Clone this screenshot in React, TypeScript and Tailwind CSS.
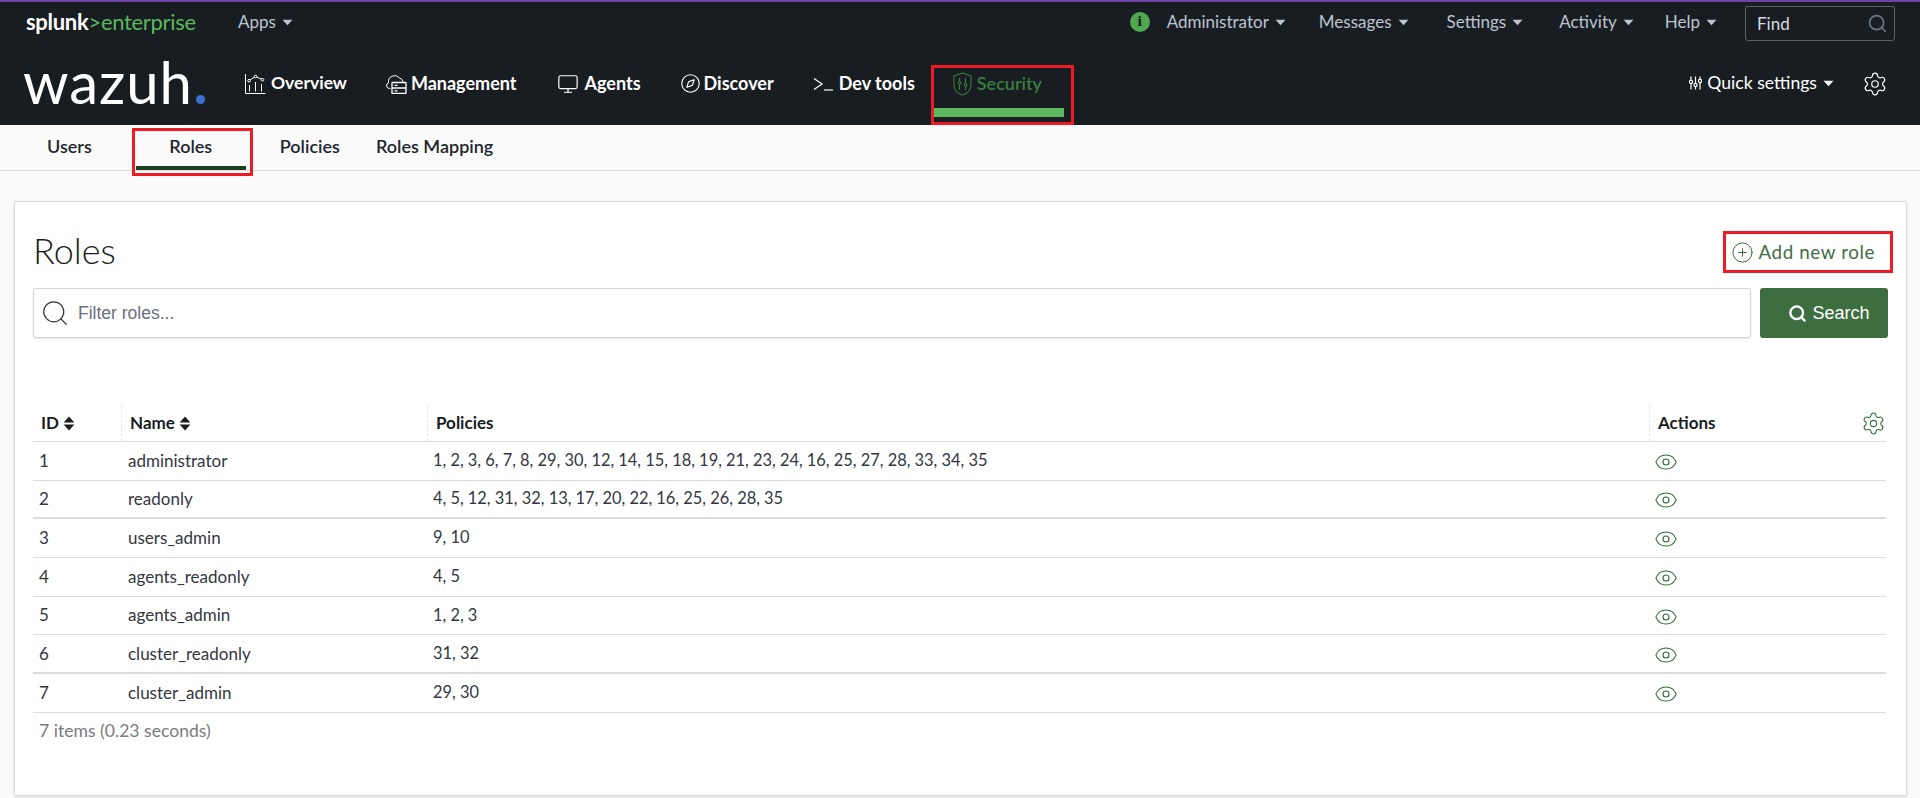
import { CirclePlus, Compass, Eye, Monitor, Search, Settings } from 'lucide-react';

const ROLES = [
  { id: 1, name: 'administrator', policies: '1, 2, 3, 6, 7, 8, 29, 30, 12, 14, 15, 18, 19, 21, 23, 24, 16, 25, 27, 28, 33, 34, 35' },
  { id: 2, name: 'readonly', policies: '4, 5, 12, 31, 32, 13, 17, 20, 22, 16, 25, 26, 28, 35', thick: true },
  { id: 3, name: 'users_admin', policies: '9, 10' },
  { id: 4, name: 'agents_readonly', policies: '4, 5' },
  { id: 5, name: 'agents_admin', policies: '1, 2, 3' },
  { id: 6, name: 'cluster_readonly', policies: '31, 32', thick: true },
  { id: 7, name: 'cluster_admin', policies: '29, 30' },
];

function Caret({ className }: { className?: string }) {
  return (
    <svg className={className} width="11" height="7" viewBox="0 0 10 6" fill="currentColor">
      <path d="M0.5 0.5h9L5 5.6z" />
    </svg>
  );
}

function SortCaret() {
  return (
    <svg className="ml-[4px]" width="12" height="15" viewBox="0 0 11 14" fill="#1a1c21">
      <path d="M5.5 0.5 10.5 6H0.5z" />
      <path d="M5.5 13.5 10.5 8H0.5z" />
    </svg>
  );
}

function TopLink({ label, className }: { label: string; className: string }) {
  return (
    <div className={`flex items-center gap-[6px] text-[17px] text-[#bcc5cf] ${className}`}>
      <span>{label}</span>
      <Caret className="text-[#bcc5cf]" />
    </div>
  );
}

function OverviewIcon() {
  return (
    <svg width="21" height="20" viewBox="0 0 21 20" fill="none" stroke="white" strokeWidth="1">
      <path d="M0.5 0v19.5H20.500" />
      <path d="M4 6.700 10.500 2.500 17.500 5.700" />
      <circle cx="4" cy="6.700" r="1.300" fill="#181d22" />
      <circle cx="10.500" cy="2.500" r="1.300" fill="#181d22" />
      <circle cx="17.500" cy="5.700" r="1.300" fill="#181d22" />
      <path d="M4.500 11v6.500M10.500 8v9.500M16.500 10v7.500" />
    </svg>
  );
}

function ManagementIcon() {
  return (
    <svg width="21" height="21" viewBox="0 0 21 21" fill="none" stroke="white" strokeWidth="1">
      <path d="M4.500 15.500H3.500a3 3 0 0 1-1-5.800A6.200 6.200 0 0 1 13.500 5a4.500 4.500 0 0 1 3.500 4" />
      <rect x="6" y="9.500" width="14" height="11" rx="0.500" strokeWidth="1.300" />
      <path d="M6 15h14M8.500 12.300h3M8.500 17.800h3" strokeWidth="1.300" />
    </svg>
  );
}

function DevToolsIcon() {
  return (
    <svg width="20" height="14" viewBox="0 0 20 14" fill="none" stroke="white" strokeWidth="1.200">
      <path d="M1 1.500 9 7l-8 5.500" />
      <path d="M11 13h9" />
    </svg>
  );
}

function ShieldIcon() {
  return (
    <svg width="19" height="24" viewBox="0 0 19 24" fill="none" stroke="#3a7d3e" strokeWidth="1.100">
      <path d="M9.500 1 18 4v9c0 5-4 8.500-8.500 10C5 21.500 1 18 1 13V4z" />
      <path d="M6.500 6v3M6.500 13v5M12.500 6v5M12.500 15v3" />
      <circle cx="6.500" cy="11" r="1.500" />
      <circle cx="12.500" cy="13" r="1.500" />
    </svg>
  );
}

function SlidersIcon() {
  return (
    <svg width="13" height="14" viewBox="0 0 13 14" fill="none" stroke="white" strokeWidth="1.200">
      <path d="M2 0.500v3.500M2 8v5.500M6.500 0.500V7M6.500 11v2.500M11 0.500v2.500M11 7v6.500" />
      <circle cx="2" cy="6" r="1.600" />
      <circle cx="6.500" cy="9" r="1.600" />
      <circle cx="11" cy="5" r="1.600" />
    </svg>
  );
}

function HeaderCell({ label, sort, className }: { label: string; sort?: boolean; className: string }) {
  return (
    <div className={`flex h-[36px] items-center border-l border-dashed border-[#d9eedb] text-[17px] font-bold text-[#1a1c21] ${className}`}>
      <span>{label}</span>
      {sort && <SortCaret />}
    </div>
  );
}

export default function App() {
  return (
    <div className="flex h-[798px] flex-col overflow-hidden bg-[#fafafa] font-['Lato',sans-serif]">
      <header className="h-[125px] border-t-2 border-[#6f42a8] bg-[#181d22]">
        <div className="flex h-[40px] items-center">
          <div className="ml-[26px] w-[212px] text-[22px] leading-none tracking-[-0.3px]">
            <span className="font-bold text-white">splunk</span>
            <span className="text-[#5cb85c]">&gt;enterprise</span>
          </div>
          <TopLink label="Apps" className="" />
          <div className="ml-auto flex items-center">
            <div className="flex h-[20px] w-[20px] items-center justify-center rounded-full bg-[#4fa84f] font-['DejaVu_Serif',serif] text-[13px] font-bold text-[#181d22]">
              i
            </div>
            <TopLink label="Administrator" className="ml-[17px]" />
            <TopLink label="Messages" className="ml-[33px]" />
            <TopLink label="Settings" className="ml-[38px]" />
            <TopLink label="Activity" className="ml-[36px]" />
            <TopLink label="Help" className="ml-[31px]" />
            <div className="mt-[3px] mr-[25px] ml-[28px] flex h-[35px] w-[150px] items-center justify-between rounded-[3px] border border-[#5b6168] pr-[6px] pl-[11px] text-[17px] text-[#d5dbe1]">
              <span>Find</span>
              <Search size={21} strokeWidth={1.800} className="text-[#6d7784]" />
            </div>
          </div>
        </div>
        <div className="flex h-[83px] items-center">
          <div className="ml-[23px] flex w-[222px] items-baseline pb-[3px] text-[58px] leading-none tracking-[1px] text-white">
            wazuh
            <span className="ml-[3px] h-[9px] w-[9px] rounded-full bg-[#3c6fd6]" />
          </div>
          <div className="flex items-center gap-[5px] text-[17.500px] font-bold text-white">
            <OverviewIcon />
            <span>Overview</span>
          </div>
          <div className="ml-[39px] flex items-center gap-[4px] text-[18px] font-bold text-white">
            <ManagementIcon />
            <span>Management</span>
          </div>
          <div className="ml-[41px] flex items-center gap-[5px] text-[18px] font-bold text-white">
            <Monitor size={22} strokeWidth={1.300} />
            <span>Agents</span>
          </div>
          <div className="ml-[39px] flex items-center gap-[3px] text-[18px] font-bold text-white">
            <Compass size={21} strokeWidth={1.300} />
            <span>Discover</span>
          </div>
          <div className="ml-[39px] flex items-center gap-[6px] text-[18px] font-bold text-white">
            <DevToolsIcon />
            <span>Dev tools</span>
          </div>
          <div className="relative ml-[18px] flex h-[83px] w-[131px] items-center gap-[5px] pl-[20px] text-[18px] font-semibold text-[#3a7d3e]">
            <ShieldIcon />
            <span>Security</span>
            <span className="absolute right-0 bottom-[8px] left-0 h-[9px] bg-[#5cb85c]" />
            <span className="absolute top-[23px] -right-[10px] bottom-0 -left-[2px] border-[3px] border-[#ed1c24]" />
          </div>
          <div className="ml-auto flex items-center gap-[5px] text-[17.600px] text-white">
            <SlidersIcon />
            <span>Quick settings</span>
            <Caret className="ml-[1px] text-white" />
          </div>
          <Settings size={26} strokeWidth={1.100} className="mr-[32px] ml-[28px] text-white" />
        </div>
      </header>

      <nav className="flex h-[46px] items-center border-b border-[#dcdcdc] bg-[#fafafa] pb-[2px] text-[18px] font-semibold text-[#23262d]">
        <span className="ml-[47px]">Users</span>
        <div className="relative ml-[44px] flex h-[44px] w-[110px] items-center justify-center">
          <span>Roles</span>
          <span className="absolute right-0 -bottom-[1px] left-0 h-[4px] bg-[#1f3d1f]" />
          <span className="absolute top-[3px] -right-[7px] -bottom-[7px] -left-[4px] border-[3px] border-[#ed1c24]" />
        </div>
        <span className="ml-[34px]">Policies</span>
        <span className="ml-[36px]">Roles Mapping</span>
      </nav>

      <main className="flex-1 pt-[30px] pr-[13px] pl-[14px]">
        <section className="h-[595px] rounded-[2px] border border-[#dcdcdc] bg-white pt-[29px] pr-[18px] pl-[18px] shadow-[0_1px_3px_rgba(0,0,0,0.12)]">
          <div className="flex h-[42px] items-center justify-between">
            <h1 className="pb-[4px] text-[36px] leading-none font-light text-[#1a1c21]">Roles</h1>
            <div className="relative mr-[13px] flex items-center gap-[5px] text-[18.800px] tracking-[0.6px] text-[#3f6e4a]">
              <CirclePlus size={23} strokeWidth={1} className="text-[#2f6b35]" />
              <span>Add new role</span>
              <span className="absolute -top-[7px] -right-[18px] -bottom-[7px] -left-[8px] border-[3px] border-[#ed1c24]" />
            </div>
          </div>

          <div className="mt-[15px] flex gap-[9px]">
            <div className="flex h-[50px] flex-1 items-center rounded-[3px] border border-[#d3d6db] bg-white pl-[6px] shadow-[0_1px_2px_rgba(0,0,0,0.1)]">
              <Search size={30} strokeWidth={1} className="text-[#343741]" />
              <span className="ml-[8px] font-['Liberation_Sans',sans-serif] text-[17.500px] text-[#69707d]">Filter roles...</span>
            </div>
            <button className="flex h-[50px] w-[128px] items-center justify-center gap-[5px] rounded-[3px] bg-[#3c6e3f] pl-[10px] font-['Liberation_Sans',sans-serif] text-[18px] text-white">
              <Search size={19} strokeWidth={3} />
              Search
            </button>
          </div>

          <div className="mt-[67px] mr-[2px]">
            <div className="grid grid-cols-[88px_306px_1222px_237px] items-center border-b border-[#dcdcdc]">
              <div className="flex items-center pl-[8px] text-[17px] font-bold text-[#1a1c21]">
                ID
                <SortCaret />
              </div>
              <HeaderCell label="Name" sort className="pl-[8px]" />
              <HeaderCell label="Policies" className="pl-[8px]" />
              <div className="flex h-[36px] items-center justify-between border-l border-dashed border-[#d9eedb] pl-[8px] text-[17px] font-bold text-[#1a1c21]">
                <span>Actions</span>
                <Settings size={25} strokeWidth={1} className="text-[#2f6b35]" />
              </div>
            </div>
            {ROLES.map((role) => (
              <div
                key={role.id}
                className={`grid h-[38.700px] grid-cols-[88px_306px_1222px_237px] items-center border-[#dcdcdc] pb-[1px] text-[17px] text-[#343741] ${role.thick ? 'border-b-2' : 'border-b'}`}
              >
                <span className="pl-[6px]">{role.id}</span>
                <span className="pl-[7px]">{role.name}</span>
                <span className="pl-[6px] text-[16.400px]">{role.policies}</span>
                <Eye size={24} strokeWidth={1.100} className="mt-[3px] ml-[5px] text-[#2f6b35]" />
              </div>
            ))}
            <p className="mt-[5px] pl-[6px] text-[17.600px] text-[#7b7b7b]">7 items (0.23 seconds)</p>
          </div>
        </section>
      </main>
    </div>
  );
}
